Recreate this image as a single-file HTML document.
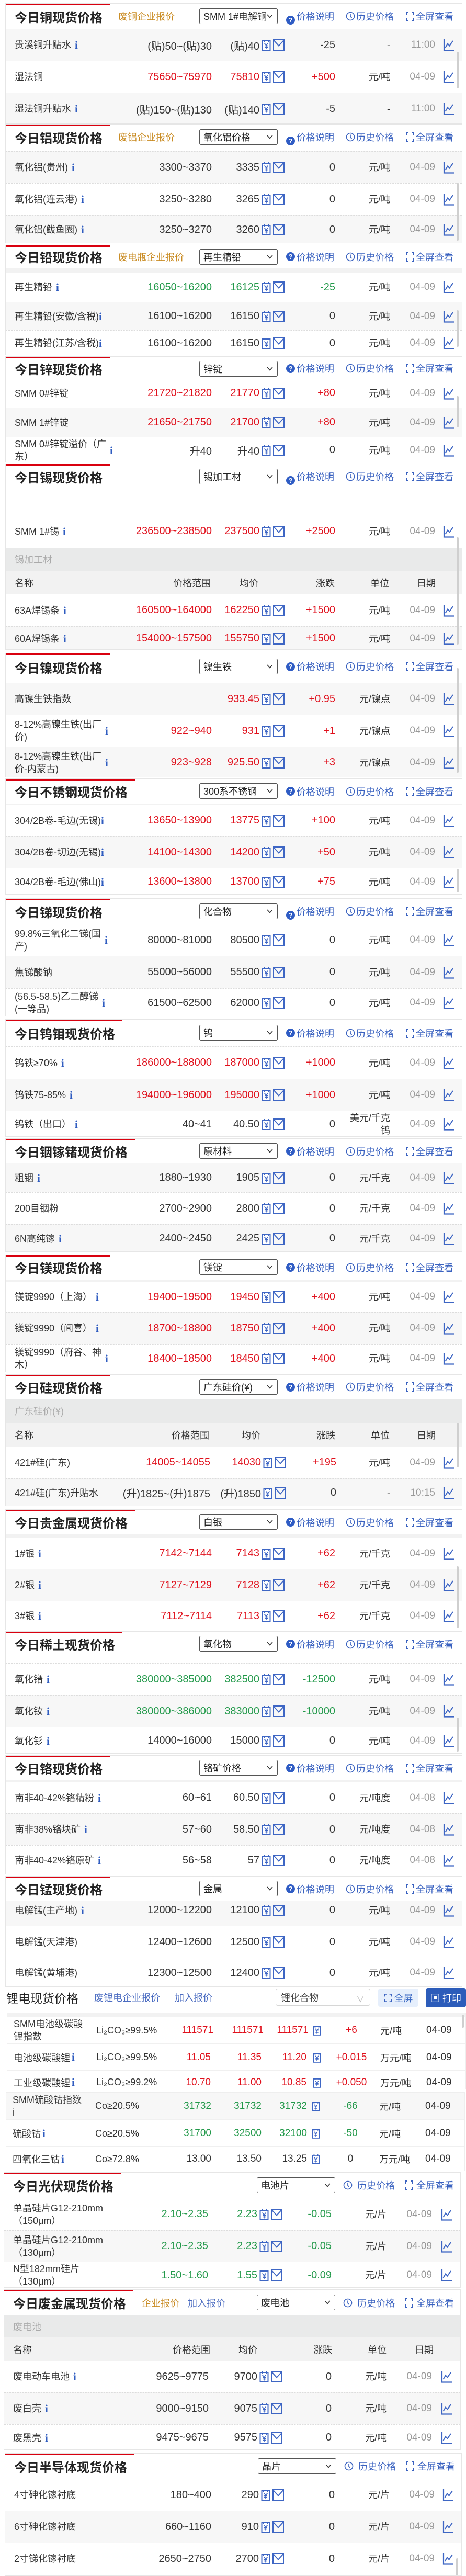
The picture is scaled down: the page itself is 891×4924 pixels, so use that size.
<!DOCTYPE html>
<html><head><meta charset="utf-8">
<style>
*{box-sizing:border-box}
body{margin:0;width:891px;height:4924px;position:relative;overflow:hidden;background:#fff;font-family:"Liberation Sans","Noto Sans CJK SC",sans-serif;color:#333}
.s{position:absolute;left:10px;width:874px;border:1px solid #e6e6e6;background:#fff;overflow:hidden}
.bar{position:absolute;left:-1px;top:-1px;height:4px;background:#d9000f}
.hd{position:absolute;left:0;right:0;top:0;height:48px}
.hd>*{position:absolute;top:0;height:48px;display:flex;align-items:center;white-space:nowrap}
.t{left:17px;font-size:24px;font-weight:bold;color:#222}
.co{left:215px;font-size:18px;color:#c98b22}
.sel{top:9px!important;height:30px!important;left:370px;width:150px;border:1px solid #555;border-radius:3px;font-size:18px;color:#222;padding-left:7px;background:#fff;overflow:hidden}
.sel svg{position:absolute;right:8px;top:10px}
.lk{font-size:18px;color:#3a62c0}
.q{left:536px}.qt{left:556px}.ck{left:650px}.ckt{left:670px}.fs{left:765px}.fst{left:784px}
.qi{width:17px;height:17px;border-radius:50%;background:#2f5cc4;color:#fff;font-size:13px;font-weight:bold;display:flex;align-items:center;justify-content:center;margin-top:15px;height:17px!important}
.r{position:absolute;left:0;right:0;border-top:1px dashed #dcdcdc;background:#fff}
.g{background:#f7f7f7}
.r>*{position:absolute;top:0;bottom:0;display:flex;align-items:center;white-space:nowrap}
.n{left:17px;font-size:18px;color:#333;line-height:24px}
.p{left:150px;width:244px;justify-content:flex-end;font-size:20px}
.v{left:395px;width:90px;justify-content:flex-end;font-size:20px}
.y{left:489px}.e{left:511px}
.c{left:530px;width:100px;justify-content:flex-end;font-size:20px}
.u{left:640px;width:95px;justify-content:flex-end;text-align:right;font-size:18px;line-height:24px;white-space:normal!important}
.d{left:760px;width:61px;justify-content:flex-end;font-size:19px;color:#999}
.k{left:836px}
.R{color:#e0101c}.G{color:#22994a}.B{color:#333}
.i{font-family:"Liberation Serif",serif;font-weight:bold;color:#2f5cc0;font-size:21px;margin-left:7px}
.grp{position:absolute;left:0;right:0;background:#e9eaea;color:#aaa;font-size:18px;padding-left:17px;display:flex;align-items:center}
.th{position:absolute;left:0;right:0;background:#f2f2f2;font-size:18px;color:#333}
.th>*{position:absolute;top:0;bottom:0;display:flex;align-items:center}
.strip{position:absolute;left:0;right:0;background:#f2f2f2}
.sb{position:absolute;right:6px;width:4px;background:#cfcfcf;border-radius:2px}
.lt{position:absolute;font-size:18px;white-space:nowrap;display:flex;align-items:center}
</style></head><body>
<svg width="0" height="0" style="position:absolute">
<defs>
<symbol id="yen" viewBox="0 0 18 22"><rect x="1.5" y="3" width="15" height="18" fill="#fff" stroke="#3e66c4" stroke-width="2"/><path d="M5 1v4M13 1v4" stroke="#3e66c4" stroke-width="2"/><path d="M5.5 7.5L9 11.5L12.5 7.5M9 11.5V18.5M6 12.5H12M6 15.5H12" fill="none" stroke="#3e66c4" stroke-width="1.6"/></symbol>
<symbol id="env" viewBox="0 0 22 22"><rect x="1" y="1" width="20" height="20" fill="none" stroke="#3e66c4" stroke-width="2"/><path d="M1.5 2L11 12.5L20.5 2" fill="none" stroke="#3e66c4" stroke-width="2"/></symbol>
<symbol id="cht" viewBox="0 0 22 24"><path d="M2 1V22.5H21" fill="none" stroke="#3e66c4" stroke-width="2.2"/><path d="M4.5 17L9 9.5L12.5 13.5L19 4" fill="none" stroke="#3e66c4" stroke-width="2"/></symbol>
<symbol id="clk" viewBox="0 0 18 18"><circle cx="9" cy="9" r="7.5" fill="none" stroke="#3a62c0" stroke-width="1.6"/><path d="M9 4.5V9.5L11.5 12" fill="none" stroke="#3a62c0" stroke-width="1.6"/></symbol>
<symbol id="ful" viewBox="0 0 16 18"><path d="M1 6V1H5M11 1H15V6M15 12V17H11M5 17H1V12" fill="none" stroke="#3a62c0" stroke-width="2"/></symbol>
<symbol id="chv" viewBox="0 0 12 8"><path d="M1 1L6 6.5L11 1" fill="none" stroke="#333" stroke-width="1.6"/></symbol>
</defs></svg>

<!-- 1 copper -->
<div class="s" style="top:6px;height:231px">
<div class="bar" style="width:200px"></div>
<div class="hd"><span class="t">今日铜现货价格</span><span class="co">废铜企业报价</span><span class="sel">SMM 1#电解铜<svg width="12" height="8"><use href="#chv"/></svg></span>
<span class="q"><span class="qi">?</span></span><span class="lk qt">价格说明</span><span class="ck"><svg width="18" height="18"><use href="#clk"/></svg></span><span class="lk ckt">历史价格</span><span class="fs"><svg width="16" height="18"><use href="#ful"/></svg></span><span class="lk fst">全屏查看</span></div>
<div class="r g" style="top:48px;height:61px"><span class="n">贵溪铜升贴水<b class="i">i</b></span><span class="p B">(贴)50~(贴)30</span><span class="v B">(贴)40</span><span class="y"><svg width="18" height="22"><use href="#yen"/></svg></span><span class="e"><svg width="22" height="22"><use href="#env"/></svg></span><span class="c B">-25</span><span class="u">-</span><span class="d">11:00</span><span class="k"><svg width="22" height="24"><use href="#cht"/></svg></span></div>
<div class="r" style="top:109px;height:61px"><span class="n">湿法铜</span><span class="p R">75650~75970</span><span class="v R">75810</span><span class="y"><svg width="18" height="22"><use href="#yen"/></svg></span><span class="e"><svg width="22" height="22"><use href="#env"/></svg></span><span class="c R">+500</span><span class="u">元/吨</span><span class="d">04-09</span><span class="k"><svg width="22" height="24"><use href="#cht"/></svg></span></div>
<div class="r g" style="top:170px;height:61px"><span class="n">湿法铜升贴水<b class="i">i</b></span><span class="p B">(贴)150~(贴)130</span><span class="v B">(贴)140</span><span class="y"><svg width="18" height="22"><use href="#yen"/></svg></span><span class="e"><svg width="22" height="22"><use href="#env"/></svg></span><span class="c B">-5</span><span class="u">-</span><span class="d">11:00</span><span class="k"><svg width="22" height="24"><use href="#cht"/></svg></span></div>
<div class="sb" style="top:92px;height:70px"></div>
</div>

<!-- 2 aluminum -->
<div class="s" style="top:237px;height:228px">
<div class="bar" style="width:200px"></div>
<div class="hd"><span class="t">今日铝现货价格</span><span class="co">废铝企业报价</span><span class="sel">氧化铝价格<svg width="12" height="8"><use href="#chv"/></svg></span>
<span class="q"><span class="qi">?</span></span><span class="lk qt">价格说明</span><span class="ck"><svg width="18" height="18"><use href="#clk"/></svg></span><span class="lk ckt">历史价格</span><span class="fs"><svg width="16" height="18"><use href="#ful"/></svg></span><span class="lk fst">全屏查看</span></div>
<div class="r g" style="top:51px;height:61px"><span class="n">氧化铝(贵州)<b class="i">i</b></span><span class="p B">3300~3370</span><span class="v B">3335</span><span class="y"><svg width="18" height="22"><use href="#yen"/></svg></span><span class="e"><svg width="22" height="22"><use href="#env"/></svg></span><span class="c B">0</span><span class="u">元/吨</span><span class="d">04-09</span><span class="k"><svg width="22" height="24"><use href="#cht"/></svg></span></div>
<div class="r" style="top:112px;height:61px"><span class="n">氧化铝(连云港)<b class="i">i</b></span><span class="p B">3250~3280</span><span class="v B">3265</span><span class="y"><svg width="18" height="22"><use href="#yen"/></svg></span><span class="e"><svg width="22" height="22"><use href="#env"/></svg></span><span class="c B">0</span><span class="u">元/吨</span><span class="d">04-09</span><span class="k"><svg width="22" height="24"><use href="#cht"/></svg></span></div>
<div class="r g" style="top:173px;height:55px"><span class="n">氧化铝(鲅鱼圈)<b class="i">i</b></span><span class="p B">3250~3270</span><span class="v B">3260</span><span class="y"><svg width="18" height="22"><use href="#yen"/></svg></span><span class="e"><svg width="22" height="22"><use href="#env"/></svg></span><span class="c B">0</span><span class="u">元/吨</span><span class="d">04-09</span><span class="k"><svg width="22" height="24"><use href="#cht"/></svg></span></div>
<div class="sb" style="top:112px;height:110px"></div>
</div>

<!-- 3 lead -->
<div class="s" style="top:468px;height:211px">
<div class="bar" style="width:200px"></div>
<div class="hd" style="height:43px"><span class="t" style="height:43px">今日铅现货价格</span><span class="co" style="height:43px">废电瓶企业报价</span><span class="sel" style="top:7px!important">再生精铅<svg width="12" height="8"><use href="#chv"/></svg></span>
<span class="q" style="height:43px"><span class="qi" style="margin-top:0">?</span></span><span class="lk qt" style="height:43px">价格说明</span><span class="ck" style="height:43px"><svg width="18" height="18"><use href="#clk"/></svg></span><span class="lk ckt" style="height:43px">历史价格</span><span class="fs" style="height:43px"><svg width="16" height="18"><use href="#ful"/></svg></span><span class="lk fst" style="height:43px">全屏查看</span></div>
<div class="strip" style="top:43px;height:9px"></div>
<div class="r" style="top:52px;height:56px;border-top:0"><span class="n">再生精铅<b class="i">i</b></span><span class="p G">16050~16200</span><span class="v G">16125</span><span class="y"><svg width="18" height="22"><use href="#yen"/></svg></span><span class="e"><svg width="22" height="22"><use href="#env"/></svg></span><span class="c G">-25</span><span class="u">元/吨</span><span class="d">04-09</span><span class="k"><svg width="22" height="24"><use href="#cht"/></svg></span></div>
<div class="r g" style="top:108px;height:54px"><span class="n">再生精铅(安徽/含税)<br><b class="i" style="margin-left:0">i</b></span><span class="p B">16100~16200</span><span class="v B">16150</span><span class="y"><svg width="18" height="22"><use href="#yen"/></svg></span><span class="e"><svg width="22" height="22"><use href="#env"/></svg></span><span class="c B">0</span><span class="u">元/吨</span><span class="d">04-09</span><span class="k"><svg width="22" height="24"><use href="#cht"/></svg></span></div>
<div class="r" style="top:162px;height:49px"><span class="n">再生精铅(江苏/含税)<br><b class="i" style="margin-left:0">i</b></span><span class="p B">16100~16200</span><span class="v B">16150</span><span class="y"><svg width="18" height="22"><use href="#yen"/></svg></span><span class="e"><svg width="22" height="22"><use href="#env"/></svg></span><span class="c B">0</span><span class="u">元/吨</span><span class="d">04-09</span><span class="k"><svg width="22" height="24"><use href="#cht"/></svg></span></div>
<div class="sb" style="top:124px;height:70px"></div>
</div>

<!-- 4 zinc -->
<div class="s" style="top:681px;height:203px">
<div class="bar" style="width:200px"></div>
<div class="hd" style="height:44px"><span class="t" style="height:44px">今日锌现货价格</span><span class="sel" style="top:8px!important">锌锭<svg width="12" height="8"><use href="#chv"/></svg></span>
<span class="q" style="height:44px"><span class="qi" style="margin-top:0">?</span></span><span class="lk qt" style="height:44px">价格说明</span><span class="ck" style="height:44px"><svg width="18" height="18"><use href="#clk"/></svg></span><span class="lk ckt" style="height:44px">历史价格</span><span class="fs" style="height:44px"><svg width="16" height="18"><use href="#ful"/></svg></span><span class="lk fst" style="height:44px">全屏查看</span></div>
<div class="r" style="top:42px;height:55px;border-top:0"><span class="n">SMM 0#锌锭</span><span class="p R">21720~21820</span><span class="v R">21770</span><span class="y"><svg width="18" height="22"><use href="#yen"/></svg></span><span class="e"><svg width="22" height="22"><use href="#env"/></svg></span><span class="c R">+80</span><span class="u">元/吨</span><span class="d">04-09</span><span class="k"><svg width="22" height="24"><use href="#cht"/></svg></span></div>
<div class="r g" style="top:97px;height:56px"><span class="n">SMM 1#锌锭</span><span class="p R">21650~21750</span><span class="v R">21700</span><span class="y"><svg width="18" height="22"><use href="#yen"/></svg></span><span class="e"><svg width="22" height="22"><use href="#env"/></svg></span><span class="c R">+80</span><span class="u">元/吨</span><span class="d">04-09</span><span class="k"><svg width="22" height="24"><use href="#cht"/></svg></span></div>
<div class="r" style="top:153px;height:50px"><span class="n">SMM 0#锌锭溢价（广<br>东）<b class="i">i</b></span><span class="p B">升40</span><span class="v B">升40</span><span class="y"><svg width="18" height="22"><use href="#yen"/></svg></span><span class="e"><svg width="22" height="22"><use href="#env"/></svg></span><span class="c B">0</span><span class="u">元/吨</span><span class="d">04-09</span><span class="k"><svg width="22" height="24"><use href="#cht"/></svg></span></div>
<div class="sb" style="top:75px;height:60px"></div>
</div>

<!-- 5 tin -->
<div class="s" style="top:886px;height:356px">
<div class="bar" style="width:200px"></div>
<div class="hd"><span class="t">今日锡现货价格</span><span class="sel">锡加工材<svg width="12" height="8"><use href="#chv"/></svg></span>
<span class="q"><span class="qi">?</span></span><span class="lk qt">价格说明</span><span class="ck"><svg width="18" height="18"><use href="#clk"/></svg></span><span class="lk ckt">历史价格</span><span class="fs"><svg width="16" height="18"><use href="#ful"/></svg></span><span class="lk fst">全屏查看</span></div>
<div class="r" style="top:97px;height:63px;border-top:0"><span class="n">SMM 1#锡<b class="i">i</b></span><span class="p R">236500~238500</span><span class="v R">237500</span><span class="y"><svg width="18" height="22"><use href="#yen"/></svg></span><span class="e"><svg width="22" height="22"><use href="#env"/></svg></span><span class="c R">+2500</span><span class="u">元/吨</span><span class="d">04-09</span><span class="k"><svg width="22" height="24"><use href="#cht"/></svg></span></div>
<div class="grp" style="top:160px;height:44px">锡加工材</div>
<div class="th" style="top:204px;height:45px"><span style="left:17px">名称</span><span style="left:320px">价格范围</span><span style="left:447px">均价</span><span style="left:593px">涨跌</span><span style="left:697px">单位</span><span style="left:786px">日期</span></div>
<div class="r" style="top:249px;height:61px;border-top:0"><span class="n">63A焊锡条<b class="i">i</b></span><span class="p R">160500~164000</span><span class="v R">162250</span><span class="y"><svg width="18" height="22"><use href="#yen"/></svg></span><span class="e"><svg width="22" height="22"><use href="#env"/></svg></span><span class="c R">+1500</span><span class="u">元/吨</span><span class="d">04-09</span><span class="k"><svg width="22" height="24"><use href="#cht"/></svg></span></div>
<div class="r g" style="top:310px;height:46px"><span class="n">60A焊锡条<b class="i">i</b></span><span class="p R">154000~157500</span><span class="v R">155750</span><span class="y"><svg width="18" height="22"><use href="#yen"/></svg></span><span class="e"><svg width="22" height="22"><use href="#env"/></svg></span><span class="c R">+1500</span><span class="u">元/吨</span><span class="d">04-09</span><span class="k"><svg width="22" height="24"><use href="#cht"/></svg></span></div>
<div class="sb" style="top:140px;height:205px"></div>
</div>

<!-- 6 nickel -->
<div class="s" style="top:1248px;height:238px">
<div class="bar" style="width:200px"></div>
<div class="hd" style="height:56px"><span class="t" style="height:52px">今日镍现货价格</span><span class="sel" style="top:10px!important">镍生铁<svg width="12" height="8"><use href="#chv"/></svg></span>
<span class="q" style="height:50px"><span class="qi" style="margin-top:0">?</span></span><span class="lk qt" style="height:50px">价格说明</span><span class="ck" style="height:50px"><svg width="18" height="18"><use href="#clk"/></svg></span><span class="lk ckt" style="height:50px">历史价格</span><span class="fs" style="height:50px"><svg width="16" height="18"><use href="#ful"/></svg></span><span class="lk fst" style="height:50px">全屏查看</span></div>
<div class="r g" style="top:56px;height:61px"><span class="n">高镍生铁指数</span><span class="v R">933.45</span><span class="y"><svg width="18" height="22"><use href="#yen"/></svg></span><span class="e"><svg width="22" height="22"><use href="#env"/></svg></span><span class="c R">+0.95</span><span class="u">元/镍点</span><span class="d">04-09</span><span class="k"><svg width="22" height="24"><use href="#cht"/></svg></span></div>
<div class="r" style="top:117px;height:61px"><span class="n">8-12%高镍生铁(出厂<br>价)<b class="i">i</b></span><span class="p R">922~940</span><span class="v R">931</span><span class="y"><svg width="18" height="22"><use href="#yen"/></svg></span><span class="e"><svg width="22" height="22"><use href="#env"/></svg></span><span class="c R">+1</span><span class="u">元/镍点</span><span class="d">04-09</span><span class="k"><svg width="22" height="24"><use href="#cht"/></svg></span></div>
<div class="r g" style="top:178px;height:60px"><span class="n">8-12%高镍生铁(出厂<br>价-内蒙古)<b class="i">i</b></span><span class="p R">923~928</span><span class="v R">925.50</span><span class="y"><svg width="18" height="22"><use href="#yen"/></svg></span><span class="e"><svg width="22" height="22"><use href="#env"/></svg></span><span class="c R">+3</span><span class="u">元/镍点</span><span class="d">04-09</span><span class="k"><svg width="22" height="24"><use href="#cht"/></svg></span></div>
<div class="sb" style="top:28px;height:200px"></div>
</div>

<!-- 7 stainless -->
<div class="s" style="top:1488px;height:222px">
<div class="bar" style="width:248px"></div>
<div class="hd" style="height:47px"><span class="t" style="height:47px">今日不锈钢现货价格</span><span class="sel" style="top:8px!important">300系不锈钢<svg width="12" height="8"><use href="#chv"/></svg></span>
<span class="q" style="height:47px"><span class="qi" style="margin-top:0">?</span></span><span class="lk qt" style="height:47px">价格说明</span><span class="ck" style="height:47px"><svg width="18" height="18"><use href="#clk"/></svg></span><span class="lk ckt" style="height:47px">历史价格</span><span class="fs" style="height:47px"><svg width="16" height="18"><use href="#ful"/></svg></span><span class="lk fst" style="height:47px">全屏查看</span></div>
<div class="strip" style="top:47px;height:3px"></div>
<div class="r" style="top:50px;height:59px;border-top:0"><span class="n">304/2B卷-毛边(无锡)<br><b class="i" style="margin-left:0">i</b></span><span class="p R">13650~13900</span><span class="v R">13775</span><span class="y"><svg width="18" height="22"><use href="#yen"/></svg></span><span class="e"><svg width="22" height="22"><use href="#env"/></svg></span><span class="c R">+100</span><span class="u">元/吨</span><span class="d">04-09</span><span class="k"><svg width="22" height="24"><use href="#cht"/></svg></span></div>
<div class="r g" style="top:109px;height:61px"><span class="n">304/2B卷-切边(无锡)<br><b class="i" style="margin-left:0">i</b></span><span class="p R">14100~14300</span><span class="v R">14200</span><span class="y"><svg width="18" height="22"><use href="#yen"/></svg></span><span class="e"><svg width="22" height="22"><use href="#env"/></svg></span><span class="c R">+50</span><span class="u">元/吨</span><span class="d">04-09</span><span class="k"><svg width="22" height="24"><use href="#cht"/></svg></span></div>
<div class="r" style="top:170px;height:52px"><span class="n">304/2B卷-毛边(佛山)<br><b class="i" style="margin-left:0">i</b></span><span class="p R">13600~13800</span><span class="v R">13700</span><span class="y"><svg width="18" height="22"><use href="#yen"/></svg></span><span class="e"><svg width="22" height="22"><use href="#env"/></svg></span><span class="c R">+75</span><span class="u">元/吨</span><span class="d">04-09</span><span class="k"><svg width="22" height="24"><use href="#cht"/></svg></span></div>
<div class="sb" style="top:172px;height:45px"></div>
</div>

<!-- 8 antimony -->
<div class="s" style="top:1717px;height:226px">
<div class="bar" style="width:200px"></div>
<div class="hd"><span class="t">今日锑现货价格</span><span class="sel">化合物<svg width="12" height="8"><use href="#chv"/></svg></span>
<span class="q"><span class="qi">?</span></span><span class="lk qt">价格说明</span><span class="ck"><svg width="18" height="18"><use href="#clk"/></svg></span><span class="lk ckt">历史价格</span><span class="fs"><svg width="16" height="18"><use href="#ful"/></svg></span><span class="lk fst">全屏查看</span></div>
<div class="r" style="top:48px;height:61px"><span class="n">99.8%三氧化二锑(国<br>产)<b class="i">i</b></span><span class="p B">80000~81000</span><span class="v B">80500</span><span class="y"><svg width="18" height="22"><use href="#yen"/></svg></span><span class="e"><svg width="22" height="22"><use href="#env"/></svg></span><span class="c B">0</span><span class="u">元/吨</span><span class="d">04-09</span><span class="k"><svg width="22" height="24"><use href="#cht"/></svg></span></div>
<div class="r g" style="top:109px;height:62px"><span class="n">焦锑酸钠</span><span class="p B">55000~56000</span><span class="v B">55500</span><span class="y"><svg width="18" height="22"><use href="#yen"/></svg></span><span class="e"><svg width="22" height="22"><use href="#env"/></svg></span><span class="c B">0</span><span class="u">元/吨</span><span class="d">04-09</span><span class="k"><svg width="22" height="24"><use href="#cht"/></svg></span></div>
<div class="r" style="top:171px;height:55px"><span class="n">(56.5-58.5)乙二醇锑<br>(一等品)<b class="i">i</b></span><span class="p B">61500~62500</span><span class="v B">62000</span><span class="y"><svg width="18" height="22"><use href="#yen"/></svg></span><span class="e"><svg width="22" height="22"><use href="#env"/></svg></span><span class="c B">0</span><span class="u">元/吨</span><span class="d">04-09</span><span class="k"><svg width="22" height="24"><use href="#cht"/></svg></span></div>
</div>

<!-- 9 tungsten -->
<div class="s" style="top:1948px;height:225px">
<div class="bar" style="width:224px"></div>
<div class="hd" style="height:51px"><span class="t" style="height:51px">今日钨钼现货价格</span><span class="sel" style="top:10px!important">钨<svg width="12" height="8"><use href="#chv"/></svg></span>
<span class="q" style="height:51px"><span class="qi" style="margin-top:0">?</span></span><span class="lk qt" style="height:51px">价格说明</span><span class="ck" style="height:51px"><svg width="18" height="18"><use href="#clk"/></svg></span><span class="lk ckt" style="height:51px">历史价格</span><span class="fs" style="height:51px"><svg width="16" height="18"><use href="#ful"/></svg></span><span class="lk fst" style="height:51px">全屏查看</span></div>
<div class="r" style="top:51px;height:62px"><span class="n">钨铁≥70%<b class="i">i</b></span><span class="p R">186000~188000</span><span class="v R">187000</span><span class="y"><svg width="18" height="22"><use href="#yen"/></svg></span><span class="e"><svg width="22" height="22"><use href="#env"/></svg></span><span class="c R">+1000</span><span class="u">元/吨</span><span class="d">04-09</span><span class="k"><svg width="22" height="24"><use href="#cht"/></svg></span></div>
<div class="r g" style="top:113px;height:61px"><span class="n">钨铁75-85%<b class="i">i</b></span><span class="p R">194000~196000</span><span class="v R">195000</span><span class="y"><svg width="18" height="22"><use href="#yen"/></svg></span><span class="e"><svg width="22" height="22"><use href="#env"/></svg></span><span class="c R">+1000</span><span class="u">元/吨</span><span class="d">04-09</span><span class="k"><svg width="22" height="24"><use href="#cht"/></svg></span></div>
<div class="r" style="top:174px;height:51px"><span class="n">钨铁（出口）<b class="i">i</b></span><span class="p B">40~41</span><span class="v B">40.50</span><span class="y"><svg width="18" height="22"><use href="#yen"/></svg></span><span class="e"><svg width="22" height="22"><use href="#env"/></svg></span><span class="c B">0</span><span class="u">美元/千克<br>钨</span><span class="d">04-09</span><span class="k"><svg width="22" height="24"><use href="#cht"/></svg></span></div>
</div>

<!-- 10 indium -->
<div class="s" style="top:2176px;height:217px">
<div class="bar" style="width:248px"></div>
<div class="hd" style="height:47px"><span class="t" style="height:47px">今日铟镓锗现货价格</span><span class="sel" style="top:8px!important">原材料<svg width="12" height="8"><use href="#chv"/></svg></span>
<span class="q" style="height:47px"><span class="qi" style="margin-top:0">?</span></span><span class="lk qt" style="height:47px">价格说明</span><span class="ck" style="height:47px"><svg width="18" height="18"><use href="#clk"/></svg></span><span class="lk ckt" style="height:47px">历史价格</span><span class="fs" style="height:47px"><svg width="16" height="18"><use href="#ful"/></svg></span><span class="lk fst" style="height:47px">全屏查看</span></div>
<div class="r g" style="top:47px;height:55px;border-top:0"><span class="n">粗铟<b class="i">i</b></span><span class="p B">1880~1930</span><span class="v B">1905</span><span class="y"><svg width="18" height="22"><use href="#yen"/></svg></span><span class="e"><svg width="22" height="22"><use href="#env"/></svg></span><span class="c B">0</span><span class="u">元/千克</span><span class="d">04-09</span><span class="k"><svg width="22" height="24"><use href="#cht"/></svg></span></div>
<div class="r" style="top:102px;height:61px"><span class="n">200目铟粉</span><span class="p B">2700~2900</span><span class="v B">2800</span><span class="y"><svg width="18" height="22"><use href="#yen"/></svg></span><span class="e"><svg width="22" height="22"><use href="#env"/></svg></span><span class="c B">0</span><span class="u">元/千克</span><span class="d">04-09</span><span class="k"><svg width="22" height="24"><use href="#cht"/></svg></span></div>
<div class="r g" style="top:163px;height:54px"><span class="n">6N高纯镓<b class="i">i</b></span><span class="p B">2400~2450</span><span class="v B">2425</span><span class="y"><svg width="18" height="22"><use href="#yen"/></svg></span><span class="e"><svg width="22" height="22"><use href="#env"/></svg></span><span class="c B">0</span><span class="u">元/千克</span><span class="d">04-09</span><span class="k"><svg width="22" height="24"><use href="#cht"/></svg></span></div>
</div>

<!-- 11 magnesium -->
<div class="s" style="top:2398px;height:225px">
<div class="bar" style="width:200px"></div>
<div class="hd" style="height:47px"><span class="t" style="height:47px">今日镁现货价格</span><span class="sel" style="top:8px!important">镁锭<svg width="12" height="8"><use href="#chv"/></svg></span>
<span class="q" style="height:47px"><span class="qi" style="margin-top:0">?</span></span><span class="lk qt" style="height:47px">价格说明</span><span class="ck" style="height:47px"><svg width="18" height="18"><use href="#clk"/></svg></span><span class="lk ckt" style="height:47px">历史价格</span><span class="fs" style="height:47px"><svg width="16" height="18"><use href="#ful"/></svg></span><span class="lk fst" style="height:47px">全屏查看</span></div>
<div class="strip" style="top:47px;height:4px"></div>
<div class="r" style="top:51px;height:58px;border-top:0"><span class="n">镁锭9990（上海）<b class="i">i</b></span><span class="p R">19400~19500</span><span class="v R">19450</span><span class="y"><svg width="18" height="22"><use href="#yen"/></svg></span><span class="e"><svg width="22" height="22"><use href="#env"/></svg></span><span class="c R">+400</span><span class="u">元/吨</span><span class="d">04-09</span><span class="k"><svg width="22" height="24"><use href="#cht"/></svg></span></div>
<div class="r g" style="top:109px;height:61px"><span class="n">镁锭9990（闻喜）<b class="i">i</b></span><span class="p R">18700~18800</span><span class="v R">18750</span><span class="y"><svg width="18" height="22"><use href="#yen"/></svg></span><span class="e"><svg width="22" height="22"><use href="#env"/></svg></span><span class="c R">+400</span><span class="u">元/吨</span><span class="d">04-09</span><span class="k"><svg width="22" height="24"><use href="#cht"/></svg></span></div>
<div class="r" style="top:170px;height:55px"><span class="n">镁锭9990（府谷、神<br>木）<b class="i">i</b></span><span class="p R">18400~18500</span><span class="v R">18450</span><span class="y"><svg width="18" height="22"><use href="#yen"/></svg></span><span class="e"><svg width="22" height="22"><use href="#env"/></svg></span><span class="c R">+400</span><span class="u">元/吨</span><span class="d">04-09</span><span class="k"><svg width="22" height="24"><use href="#cht"/></svg></span></div>
</div>

<!-- 12 silicon -->
<div class="s" style="top:2627px;height:252px">
<div class="bar" style="width:200px"></div>
<div class="hd" style="height:46px"><span class="t" style="height:46px">今日硅现货价格</span><span class="sel" style="top:8px!important">广东硅价(¥)<svg width="12" height="8"><use href="#chv"/></svg></span>
<span class="q" style="height:46px"><span class="qi" style="margin-top:0">?</span></span><span class="lk qt" style="height:46px">价格说明</span><span class="ck" style="height:46px"><svg width="18" height="18"><use href="#clk"/></svg></span><span class="lk ckt" style="height:46px">历史价格</span><span class="fs" style="height:46px"><svg width="16" height="18"><use href="#ful"/></svg></span><span class="lk fst" style="height:46px">全屏查看</span></div>
<div class="grp" style="top:46px;height:46px">广东硅价(¥)</div>
<div class="th" style="top:92px;height:45px"><span style="left:17px">名称</span><span style="left:317px">价格范围</span><span style="left:451px">均价</span><span style="left:594px">涨跌</span><span style="left:698px">单位</span><span style="left:786px">日期</span></div>
<div class="r" style="top:137px;height:61px;border-top:0"><span class="n">421#硅(广东)</span><span class="p R" style="width:241px">14005~14055</span><span class="v R" style="left:398px">14030</span><span class="y" style="left:492px"><svg width="18" height="22"><use href="#yen"/></svg></span><span class="e" style="left:514px"><svg width="22" height="22"><use href="#env"/></svg></span><span class="c R" style="left:532px">+195</span><span class="u">元/吨</span><span class="d">04-09</span><span class="k"><svg width="22" height="24"><use href="#cht"/></svg></span></div>
<div class="r g" style="top:198px;height:54px"><span class="n">421#硅(广东)升贴水</span><span class="p B" style="width:241px">(升)1825~(升)1875</span><span class="v B" style="left:398px">(升)1850</span><span class="y" style="left:492px"><svg width="18" height="22"><use href="#yen"/></svg></span><span class="e" style="left:514px"><svg width="22" height="22"><use href="#env"/></svg></span><span class="c B" style="left:532px">0</span><span class="u">-</span><span class="d">10:15</span><span class="k"><svg width="22" height="24"><use href="#cht"/></svg></span></div>
<div class="sb" style="top:92px;height:85px"></div>
</div>

<!-- 13 precious -->
<div class="s" style="top:2885px;height:231px">
<div class="bar" style="width:248px"></div>
<div class="hd" style="height:47px"><span class="t" style="height:47px">今日贵金属现货价格</span><span class="sel" style="top:8px!important">白银<svg width="12" height="8"><use href="#chv"/></svg></span>
<span class="q" style="height:47px"><span class="qi" style="margin-top:0">?</span></span><span class="lk qt" style="height:47px">价格说明</span><span class="ck" style="height:47px"><svg width="18" height="18"><use href="#clk"/></svg></span><span class="lk ckt" style="height:47px">历史价格</span><span class="fs" style="height:47px"><svg width="16" height="18"><use href="#ful"/></svg></span><span class="lk fst" style="height:47px">全屏查看</span></div>
<div class="strip" style="top:47px;height:7px"></div>
<div class="r" style="top:54px;height:59px;border-top:0"><span class="n">1#银<b class="i">i</b></span><span class="p R">7142~7144</span><span class="v R">7143</span><span class="y"><svg width="18" height="22"><use href="#yen"/></svg></span><span class="e"><svg width="22" height="22"><use href="#env"/></svg></span><span class="c R">+62</span><span class="u">元/千克</span><span class="d">04-09</span><span class="k"><svg width="22" height="24"><use href="#cht"/></svg></span></div>
<div class="r g" style="top:113px;height:61px"><span class="n">2#银<b class="i">i</b></span><span class="p R">7127~7129</span><span class="v R">7128</span><span class="y"><svg width="18" height="22"><use href="#yen"/></svg></span><span class="e"><svg width="22" height="22"><use href="#env"/></svg></span><span class="c R">+62</span><span class="u">元/千克</span><span class="d">04-09</span><span class="k"><svg width="22" height="24"><use href="#cht"/></svg></span></div>
<div class="r" style="top:174px;height:57px"><span class="n">3#银<b class="i">i</b></span><span class="p R">7112~7114</span><span class="v R">7113</span><span class="y"><svg width="18" height="22"><use href="#yen"/></svg></span><span class="e"><svg width="22" height="22"><use href="#env"/></svg></span><span class="c R">+62</span><span class="u">元/千克</span><span class="d">04-09</span><span class="k"><svg width="22" height="24"><use href="#cht"/></svg></span></div>
<div class="sb" style="top:108px;height:118px"></div>
</div>

<!-- 14 rare earth -->
<div class="s" style="top:3118px;height:234px">
<div class="bar" style="width:224px"></div>
<div class="hd" style="height:47px"><span class="t" style="height:47px">今日稀土现货价格</span><span class="sel" style="top:8px!important">氧化物<svg width="12" height="8"><use href="#chv"/></svg></span>
<span class="q" style="height:47px"><span class="qi" style="margin-top:0">?</span></span><span class="lk qt" style="height:47px">价格说明</span><span class="ck" style="height:47px"><svg width="18" height="18"><use href="#clk"/></svg></span><span class="lk ckt" style="height:47px">历史价格</span><span class="fs" style="height:47px"><svg width="16" height="18"><use href="#ful"/></svg></span><span class="lk fst" style="height:47px">全屏查看</span></div>
<div class="r" style="top:60px;height:61px"><span class="n">氧化镨<b class="i">i</b></span><span class="p G">380000~385000</span><span class="v G">382500</span><span class="y"><svg width="18" height="22"><use href="#yen"/></svg></span><span class="e"><svg width="22" height="22"><use href="#env"/></svg></span><span class="c G">-12500</span><span class="u">元/吨</span><span class="d">04-09</span><span class="k"><svg width="22" height="24"><use href="#cht"/></svg></span></div>
<div class="r g" style="top:121px;height:61px"><span class="n">氧化钕<b class="i">i</b></span><span class="p G">380000~386000</span><span class="v G">383000</span><span class="y"><svg width="18" height="22"><use href="#yen"/></svg></span><span class="e"><svg width="22" height="22"><use href="#env"/></svg></span><span class="c G">-10000</span><span class="u">元/吨</span><span class="d">04-09</span><span class="k"><svg width="22" height="24"><use href="#cht"/></svg></span></div>
<div class="r" style="top:182px;height:52px"><span class="n">氧化钐<b class="i">i</b></span><span class="p B">14000~16000</span><span class="v B">15000</span><span class="y"><svg width="18" height="22"><use href="#yen"/></svg></span><span class="e"><svg width="22" height="22"><use href="#env"/></svg></span><span class="c B">0</span><span class="u">元/吨</span><span class="d">04-09</span><span class="k"><svg width="22" height="24"><use href="#cht"/></svg></span></div>
<div class="sb" style="top:164px;height:65px"></div>
</div>

<!-- 15 chromium -->
<div class="s" style="top:3355px;height:228px">
<div class="bar" style="width:200px"></div>
<div class="hd" style="height:47px"><span class="t" style="height:47px">今日铬现货价格</span><span class="sel" style="top:8px!important">铬矿价格<svg width="12" height="8"><use href="#chv"/></svg></span>
<span class="q" style="height:47px"><span class="qi" style="margin-top:0">?</span></span><span class="lk qt" style="height:47px">价格说明</span><span class="ck" style="height:47px"><svg width="18" height="18"><use href="#clk"/></svg></span><span class="lk ckt" style="height:47px">历史价格</span><span class="fs" style="height:47px"><svg width="16" height="18"><use href="#ful"/></svg></span><span class="lk fst" style="height:47px">全屏查看</span></div>
<div class="strip" style="top:47px;height:4px"></div>
<div class="r" style="top:51px;height:59px;border-top:0"><span class="n">南非40-42%铬精粉<b class="i">i</b></span><span class="p B">60~61</span><span class="v B">60.50</span><span class="y"><svg width="18" height="22"><use href="#yen"/></svg></span><span class="e"><svg width="22" height="22"><use href="#env"/></svg></span><span class="c B">0</span><span class="u">元/吨度</span><span class="d">04-08</span><span class="k"><svg width="22" height="24"><use href="#cht"/></svg></span></div>
<div class="r g" style="top:110px;height:61px"><span class="n">南非38%铬块矿<b class="i">i</b></span><span class="p B">57~60</span><span class="v B">58.50</span><span class="y"><svg width="18" height="22"><use href="#yen"/></svg></span><span class="e"><svg width="22" height="22"><use href="#env"/></svg></span><span class="c B">0</span><span class="u">元/吨度</span><span class="d">04-08</span><span class="k"><svg width="22" height="24"><use href="#cht"/></svg></span></div>
<div class="r" style="top:171px;height:57px"><span class="n">南非40-42%铬原矿<b class="i">i</b></span><span class="p B">56~58</span><span class="v B">57</span><span class="y"><svg width="18" height="22"><use href="#yen"/></svg></span><span class="e"><svg width="22" height="22"><use href="#env"/></svg></span><span class="c B">0</span><span class="u">元/吨度</span><span class="d">04-08</span><span class="k"><svg width="22" height="24"><use href="#cht"/></svg></span></div>
</div>

<!-- 16 manganese -->
<div class="s" style="top:3586px;height:212px">
<div class="bar" style="width:200px"></div>
<div class="hd" style="height:47px"><span class="t" style="height:47px">今日锰现货价格</span><span class="sel" style="top:8px!important">金属<svg width="12" height="8"><use href="#chv"/></svg></span>
<span class="q" style="height:47px"><span class="qi" style="margin-top:0">?</span></span><span class="lk qt" style="height:47px">价格说明</span><span class="ck" style="height:47px"><svg width="18" height="18"><use href="#clk"/></svg></span><span class="lk ckt" style="height:47px">历史价格</span><span class="fs" style="height:47px"><svg width="16" height="18"><use href="#ful"/></svg></span><span class="lk fst" style="height:47px">全屏查看</span></div>
<div class="r g" style="top:47px;height:47px;border-top:0"><span class="n" style="bottom:12px">电解锰(主产地)<b class="i">i</b></span><span class="p B" style="bottom:12px">12000~12200</span><span class="v B" style="bottom:12px">12100</span><span class="y" style="bottom:12px"><svg width="18" height="22"><use href="#yen"/></svg></span><span class="e" style="bottom:12px"><svg width="22" height="22"><use href="#env"/></svg></span><span class="c B" style="bottom:12px">0</span><span class="u" style="bottom:12px">元/吨</span><span class="d" style="bottom:12px">04-09</span><span class="k" style="bottom:12px"><svg width="22" height="24"><use href="#cht"/></svg></span></div>
<div class="r" style="top:94px;height:61px"><span class="n">电解锰(天津港)</span><span class="p B">12400~12600</span><span class="v B">12500</span><span class="y"><svg width="18" height="22"><use href="#yen"/></svg></span><span class="e"><svg width="22" height="22"><use href="#env"/></svg></span><span class="c B">0</span><span class="u">元/吨</span><span class="d">04-09</span><span class="k"><svg width="22" height="24"><use href="#cht"/></svg></span></div>
<div class="r" style="top:155px;height:57px"><span class="n">电解锰(黄埔港)</span><span class="p B">12300~12500</span><span class="v B">12400</span><span class="y"><svg width="18" height="22"><use href="#yen"/></svg></span><span class="e"><svg width="22" height="22"><use href="#env"/></svg></span><span class="c B">0</span><span class="u">元/吨</span><span class="d">04-09</span><span class="k"><svg width="22" height="24"><use href="#cht"/></svg></span></div>
</div>

<!-- 17 lithium -->
<div style="position:absolute;left:0;top:3798px;width:891px;height:42px;background:#fff">
<div class="lt" style="left:12px;top:0;height:40px;font-size:23px;color:#222">锂电现货价格</div>
<div class="lt" style="left:180px;top:0;height:40px;color:#4b6cc1">废锂电企业报价</div>
<div class="lt" style="left:334px;top:0;height:40px;color:#4b6cc1">加入报价</div>
<div style="position:absolute;left:527px;top:3px;width:181px;height:33px;border:1px solid #d6d6d6;border-radius:4px;font-size:18px;color:#444;padding-left:9px;display:flex;align-items:center">锂化合物<span style="position:absolute;right:10px;top:6px;color:#bbb;font-size:16px">∨</span></div>
<div style="position:absolute;left:723px;top:3px;width:77px;height:35px;background:#e6effc;border-radius:4px;color:#3d6bc4;font-size:18px;display:flex;align-items:center;justify-content:center"><svg width="16" height="16" style="margin-right:4px"><use href="#ful"/></svg>全屏</div>
<div style="position:absolute;left:814px;top:2px;width:77px;height:37px;background:#2c5cba;border-radius:4px;color:#fff;font-size:18px;display:flex;align-items:center;justify-content:center">▣ 打印</div>
</div>
<div style="position:absolute;left:13px;top:3847px;width:878px;height:147px;border:1px solid #eee;background:#fff;overflow:hidden">
<div class="strip" style="top:0;height:7px"></div>
<div style="position:absolute;left:0;right:0;top:7px;height:52px;border-bottom:2px solid #f0f0f0"></div>
<div style="position:absolute;left:0;right:0;top:59px;height:51px;border-bottom:2px solid #f0f0f0"></div>
<div class="sb" style="top:3px;height:25px;right:3px"></div>
</div>
<div class="lt" style="left:26px;top:3856px;height:50px;line-height:24px;color:#333">SMM电池级碳酸<br>锂指数</div>
<div class="lt" style="left:184px;top:3856px;height:50px">Li₂CO₃≥99.5%</div>
<div class="lt R" style="left:300px;width:108px;justify-content:flex-end;top:3856px;height:50px;font-size:19px">111571</div>
<div class="lt R" style="left:400px;width:104px;justify-content:flex-end;top:3856px;height:50px;font-size:19px">111571</div>
<div class="lt R" style="left:490px;width:100px;justify-content:flex-end;top:3856px;height:50px;font-size:19px">111571</div>
<div class="lt" style="left:598px;top:3856px;height:50px"><svg width="16" height="20"><use href="#yen"/></svg></div>
<div class="lt R" style="left:632px;width:80px;justify-content:center;top:3856px;height:50px;font-size:19px">+6</div>
<div class="lt" style="left:727px;top:3856px;height:50px">元/吨</div>
<div class="lt" style="left:815px;top:3856px;height:50px;font-size:19px">04-09</div>

<div class="lt" style="left:26px;top:3908px;height:49px">电池级碳酸锂<b class="i" style="margin-left:3px">i</b></div>
<div class="lt" style="left:184px;top:3908px;height:49px">Li₂CO₃≥99.5%</div>
<div class="lt R" style="left:300px;width:103px;justify-content:flex-end;top:3908px;height:49px;font-size:19px">11.05</div>
<div class="lt R" style="left:400px;width:100px;justify-content:flex-end;top:3908px;height:49px;font-size:19px">11.35</div>
<div class="lt R" style="left:490px;width:96px;justify-content:flex-end;top:3908px;height:49px;font-size:19px">11.20</div>
<div class="lt" style="left:598px;top:3908px;height:49px"><svg width="16" height="20"><use href="#yen"/></svg></div>
<div class="lt R" style="left:632px;width:80px;justify-content:center;top:3908px;height:49px;font-size:19px">+0.015</div>
<div class="lt" style="left:727px;top:3908px;height:49px">万元/吨</div>
<div class="lt" style="left:815px;top:3908px;height:49px;font-size:19px">04-09</div>

<div class="lt" style="left:26px;top:3958px;height:45px">工业级碳酸锂<b class="i" style="margin-left:3px">i</b></div>
<div class="lt" style="left:184px;top:3958px;height:45px">Li₂CO₃≥99.2%</div>
<div class="lt R" style="left:300px;width:103px;justify-content:flex-end;top:3958px;height:45px;font-size:19px">10.70</div>
<div class="lt R" style="left:400px;width:100px;justify-content:flex-end;top:3958px;height:45px;font-size:19px">11.00</div>
<div class="lt R" style="left:490px;width:96px;justify-content:flex-end;top:3958px;height:45px;font-size:19px">10.85</div>
<div class="lt" style="left:598px;top:3958px;height:45px"><svg width="16" height="20"><use href="#yen"/></svg></div>
<div class="lt R" style="left:632px;width:80px;justify-content:center;top:3958px;height:45px;font-size:19px">+0.050</div>
<div class="lt" style="left:727px;top:3958px;height:45px">万元/吨</div>
<div class="lt" style="left:815px;top:3958px;height:45px;font-size:19px">04-09</div>

<div style="position:absolute;left:11px;top:3999px;width:878px;height:151px;border:1px solid #eee;background:#fff;overflow:hidden">
<div style="position:absolute;left:0;right:0;top:0;height:53px;background:#f7f7f7;border-bottom:2px solid #f0f0f0"></div>
<div style="position:absolute;left:0;right:0;top:53px;height:51px;border-bottom:2px solid #f0f0f0"></div>
</div>
<div class="lt" style="left:24px;top:3999px;height:53px;line-height:24px">SMM硫酸钴指数<br>i</div>
<div class="lt" style="left:182px;top:3999px;height:53px">Co≥20.5%</div>
<div class="lt G" style="left:300px;width:104px;justify-content:flex-end;top:3999px;height:53px;font-size:19px">31732</div>
<div class="lt G" style="left:400px;width:100px;justify-content:flex-end;top:3999px;height:53px;font-size:19px">31732</div>
<div class="lt G" style="left:490px;width:97px;justify-content:flex-end;top:3999px;height:53px;font-size:19px">31732</div>
<div class="lt" style="left:596px;top:3999px;height:53px"><svg width="16" height="20"><use href="#yen"/></svg></div>
<div class="lt G" style="left:630px;width:80px;justify-content:center;top:3999px;height:53px;font-size:19px">-66</div>
<div class="lt" style="left:725px;top:3999px;height:53px">元/吨</div>
<div class="lt" style="left:813px;top:3999px;height:53px;font-size:19px">04-09</div>

<div class="lt" style="left:24px;top:4053px;height:50px">硫酸钴<b class="i" style="margin-left:3px">i</b></div>
<div class="lt" style="left:182px;top:4053px;height:50px">Co≥20.5%</div>
<div class="lt G" style="left:300px;width:104px;justify-content:flex-end;top:4053px;height:50px;font-size:19px">31700</div>
<div class="lt G" style="left:400px;width:100px;justify-content:flex-end;top:4053px;height:50px;font-size:19px">32500</div>
<div class="lt G" style="left:490px;width:97px;justify-content:flex-end;top:4053px;height:50px;font-size:19px">32100</div>
<div class="lt" style="left:596px;top:4053px;height:50px"><svg width="16" height="20"><use href="#yen"/></svg></div>
<div class="lt G" style="left:630px;width:80px;justify-content:center;top:4053px;height:50px;font-size:19px">-50</div>
<div class="lt" style="left:725px;top:4053px;height:50px">元/吨</div>
<div class="lt" style="left:813px;top:4053px;height:50px;font-size:19px">04-09</div>

<div class="lt" style="left:24px;top:4104px;height:46px">四氧化三钴<b class="i" style="margin-left:3px">i</b></div>
<div class="lt" style="left:182px;top:4104px;height:46px">Co≥72.8%</div>
<div class="lt" style="left:300px;width:104px;justify-content:flex-end;top:4104px;height:46px;font-size:19px">13.00</div>
<div class="lt" style="left:400px;width:100px;justify-content:flex-end;top:4104px;height:46px;font-size:19px">13.50</div>
<div class="lt" style="left:490px;width:97px;justify-content:flex-end;top:4104px;height:46px;font-size:19px">13.25</div>
<div class="lt" style="left:596px;top:4104px;height:46px"><svg width="16" height="20"><use href="#yen"/></svg></div>
<div class="lt" style="left:630px;width:80px;justify-content:center;top:4104px;height:46px;font-size:19px">0</div>
<div class="lt" style="left:725px;top:4104px;height:46px">万元/吨</div>
<div class="lt" style="left:813px;top:4104px;height:46px;font-size:19px">04-09</div>

<!-- 18 PV -->
<div class="s" style="top:4152px;height:221px;left:7px">
<div class="bar" style="width:224px"></div>
<div class="hd" style="height:48px"><span class="t">今日光伏现货价格</span><span class="sel" style="left:483px">电池片<svg width="12" height="8"><use href="#chv"/></svg></span>
<span class="ck" style="left:648px"><svg width="18" height="18"><use href="#clk"/></svg></span><span class="lk" style="left:675px">历史价格</span><span class="fs" style="left:766px"><svg width="16" height="18"><use href="#ful"/></svg></span><span class="lk" style="left:788px">全屏查看</span></div>
<div class="r" style="top:48px;height:62px"><span class="n">单晶硅片G12-210mm<br>（150μm）</span><span class="p G" style="width:240px">2.10~2.35</span><span class="v G" style="left:394px">2.23</span><span class="y" style="left:488px"><svg width="18" height="22"><use href="#yen"/></svg></span><span class="e" style="left:510px"><svg width="22" height="22"><use href="#env"/></svg></span><span class="c G" style="left:526px">-0.05</span><span class="u" style="left:636px">元/片</span><span class="d" style="left:757px">04-09</span><span class="k" style="left:835px"><svg width="22" height="24"><use href="#cht"/></svg></span></div>
<div class="r g" style="top:110px;height:60px"><span class="n">单晶硅片G12-210mm<br>（130μm）</span><span class="p G" style="width:240px">2.10~2.35</span><span class="v G" style="left:394px">2.23</span><span class="y" style="left:488px"><svg width="18" height="22"><use href="#yen"/></svg></span><span class="e" style="left:510px"><svg width="22" height="22"><use href="#env"/></svg></span><span class="c G" style="left:526px">-0.05</span><span class="u" style="left:636px">元/片</span><span class="d" style="left:757px">04-09</span><span class="k" style="left:835px"><svg width="22" height="24"><use href="#cht"/></svg></span></div>
<div class="r" style="top:170px;height:51px"><span class="n">N型182mm硅片<br>（130μm）</span><span class="p G" style="width:240px">1.50~1.60</span><span class="v G" style="left:394px">1.55</span><span class="y" style="left:488px"><svg width="18" height="22"><use href="#yen"/></svg></span><span class="e" style="left:510px"><svg width="22" height="22"><use href="#env"/></svg></span><span class="c G" style="left:526px">-0.09</span><span class="u" style="left:636px">元/片</span><span class="d" style="left:757px">04-09</span><span class="k" style="left:835px"><svg width="22" height="24"><use href="#cht"/></svg></span></div>
</div>

<!-- 19 waste -->
<div class="s" style="top:4376px;height:307px;left:7px">
<div class="bar" style="width:248px"></div>
<div class="hd" style="height:49px"><span class="t" style="height:49px">今日废金属现货价格</span><span class="co" style="left:263px;height:49px">企业报价</span><span class="lk" style="left:351px;height:49px;color:#4b6cc1">加入报价</span><span class="sel" style="left:483px">废电池<svg width="12" height="8"><use href="#chv"/></svg></span>
<span class="ck" style="left:648px;height:49px"><svg width="18" height="18"><use href="#clk"/></svg></span><span class="lk" style="left:675px;height:49px">历史价格</span><span class="fs" style="left:766px;height:49px"><svg width="16" height="18"><use href="#ful"/></svg></span><span class="lk" style="left:788px;height:49px">全屏查看</span></div>
<div class="grp" style="top:49px;height:42px">废电池</div>
<div class="th" style="top:91px;height:45px"><span style="left:17px">名称</span><span style="left:322px">价格范围</span><span style="left:448px">均价</span><span style="left:591px">涨跌</span><span style="left:695px">单位</span><span style="left:785px">日期</span></div>
<div class="r" style="top:136px;height:60px;border-top:0"><span class="n">废电动车电池<b class="i">i</b></span><span class="p B" style="width:241px">9625~9775</span><span class="v B" style="left:394px">9700</span><span class="y" style="left:488px"><svg width="18" height="22"><use href="#yen"/></svg></span><span class="e" style="left:510px"><svg width="22" height="22"><use href="#env"/></svg></span><span class="c B" style="left:526px">0</span><span class="u" style="left:636px">元/吨</span><span class="d" style="left:757px">04-09</span><span class="k" style="left:835px"><svg width="22" height="24"><use href="#cht"/></svg></span></div>
<div class="r g" style="top:196px;height:61px"><span class="n">废白壳<b class="i">i</b></span><span class="p B" style="width:241px">9000~9150</span><span class="v B" style="left:394px">9075</span><span class="y" style="left:488px"><svg width="18" height="22"><use href="#yen"/></svg></span><span class="e" style="left:510px"><svg width="22" height="22"><use href="#env"/></svg></span><span class="c B" style="left:526px">0</span><span class="u" style="left:636px">元/吨</span><span class="d" style="left:757px">04-09</span><span class="k" style="left:835px"><svg width="22" height="24"><use href="#cht"/></svg></span></div>
<div class="r" style="top:257px;height:50px"><span class="n">废黑壳<b class="i">i</b></span><span class="p B" style="width:241px">9475~9675</span><span class="v B" style="left:394px">9575</span><span class="y" style="left:488px"><svg width="18" height="22"><use href="#yen"/></svg></span><span class="e" style="left:510px"><svg width="22" height="22"><use href="#env"/></svg></span><span class="c B" style="left:526px">0</span><span class="u" style="left:636px">元/吨</span><span class="d" style="left:757px">04-09</span><span class="k" style="left:835px"><svg width="22" height="24"><use href="#cht"/></svg></span></div>
</div>

<!-- 20 semiconductor -->
<div class="s" style="top:4689px;height:235px;left:9px">
<div class="bar" style="width:248px"></div>
<div class="hd" style="height:48px"><span class="t">今日半导体现货价格</span><span class="sel" style="left:483px">晶片<svg width="12" height="8"><use href="#chv"/></svg></span>
<span class="ck" style="left:648px"><svg width="18" height="18"><use href="#clk"/></svg></span><span class="lk" style="left:675px">历史价格</span><span class="fs" style="left:766px"><svg width="16" height="18"><use href="#ful"/></svg></span><span class="lk" style="left:788px">全屏查看</span></div>
<div class="r" style="top:48px;height:61px"><span class="n">4寸砷化镓衬底</span><span class="p B">180~400</span><span class="v B">290</span><span class="y"><svg width="18" height="22"><use href="#yen"/></svg></span><span class="e"><svg width="22" height="22"><use href="#env"/></svg></span><span class="c B">0</span><span class="u">元/片</span><span class="d">04-09</span><span class="k"><svg width="22" height="24"><use href="#cht"/></svg></span></div>
<div class="r g" style="top:109px;height:61px"><span class="n">6寸砷化镓衬底</span><span class="p B">660~1160</span><span class="v B">910</span><span class="y"><svg width="18" height="22"><use href="#yen"/></svg></span><span class="e"><svg width="22" height="22"><use href="#env"/></svg></span><span class="c B">0</span><span class="u">元/片</span><span class="d">04-09</span><span class="k"><svg width="22" height="24"><use href="#cht"/></svg></span></div>
<div class="r" style="top:170px;height:61px"><span class="n">2寸锑化镓衬底</span><span class="p B">2650~2750</span><span class="v B">2700</span><span class="y"><svg width="18" height="22"><use href="#yen"/></svg></span><span class="e"><svg width="22" height="22"><use href="#env"/></svg></span><span class="c B">0</span><span class="u">元/片</span><span class="d">04-09</span><span class="k"><svg width="22" height="24"><use href="#cht"/></svg></span></div>
<div class="sb" style="top:200px;height:35px"></div>
</div>
</body></html>
